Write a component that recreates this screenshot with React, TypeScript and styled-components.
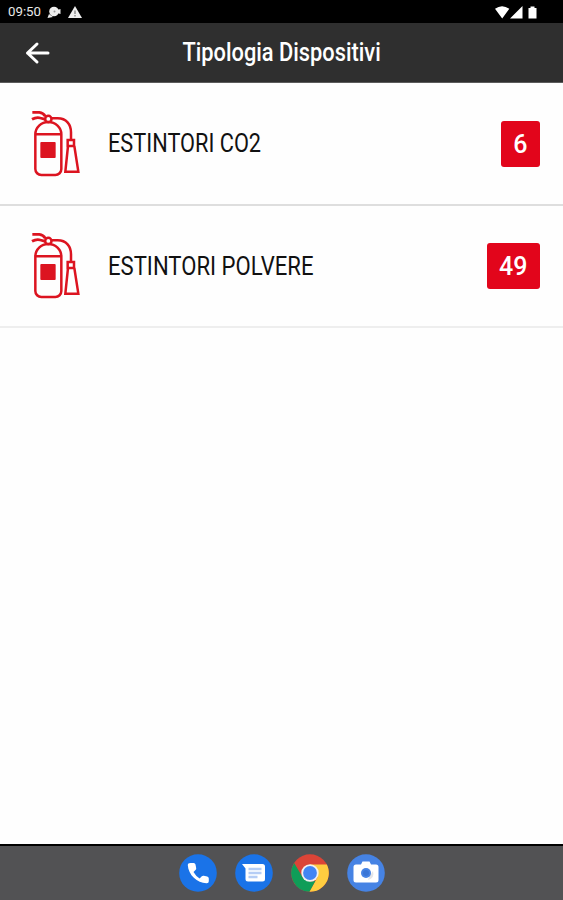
import React from 'react';
import styled, { createGlobalStyle } from 'styled-components';

const GlobalStyle = createGlobalStyle`
  * { box-sizing: border-box; }
  body { margin: 0; background: #fefefe; font-family: Roboto, "Liberation Sans", sans-serif; }
`;

const Screen = styled.div`
  display: flex;
  flex-direction: column;
  width: 100%;
  height: 100vh;
  overflow: hidden;
  background: #fefefe;
`;

const StatusBar = styled.div`
  display: flex;
  align-items: center;
  justify-content: space-between;
  height: 23px;
  flex: none;
  padding: 1px 25px 0 8px;
  background: #000;
  color: #e8e8e8;
`;

const StatusGroup = styled.div<{ $gap: number }>`
  display: flex;
  align-items: center;
  gap: ${(p) => p.$gap}px;
`;

const Clock = styled.span`
  width: 33px;
  font-size: 13px;
  line-height: 22px;
  white-space: nowrap;
  transform: scaleX(1.02);
  transform-origin: left;
`;

const Header = styled.header`
  display: grid;
  grid-template-columns: 76px 1fr 76px;
  align-items: center;
  height: 60px;
  flex: none;
  background: #2f2f2f;
  border-bottom: 1px solid #5c5c5c;
`;

const BackButton = styled.button`
  display: flex;
  align-items: center;
  justify-content: center;
  height: 59px;
  padding: 0;
  border: 0;
  background: none;
`;

const Title = styled.h1`
  justify-self: center;
  margin: 1px 0 0 1px;
  color: #fff;
  font-size: 25px;
  font-weight: 500;
  line-height: 30px;
  white-space: nowrap;
  transform: scaleX(0.873);
`;

const List = styled.main`
  flex: 1;
`;

const Row = styled.div<{ $line: string; $height: number }>`
  display: flex;
  align-items: center;
  height: ${(p) => p.$height}px;
  padding: 0 23px 0 31px;
  border-bottom: 2px solid ${(p) => p.$line};
`;

const Label = styled.span<{ $scale: number }>`
  flex: 1;
  margin: 1px 0 0 27px;
  color: #111;
  font-size: 25px;
  line-height: 30px;
  white-space: nowrap;
  transform: scaleX(${(p) => p.$scale});
  transform-origin: left;
`;

const Badge = styled.span`
  display: flex;
  align-items: center;
  justify-content: center;
  height: 46px;
  padding: 1px 12.5px 0;
  border-radius: 3px;
  background: #e2051b;
  color: #fff;
  font-size: 25px;
  font-weight: 500;
  line-height: 45px;
`;

const Dock = styled.nav`
  display: flex;
  align-items: center;
  justify-content: center;
  gap: 18px;
  height: 56px;
  flex: none;
  border-top: 2px solid #000;
  background: #525254;
`;

const Extinguisher = () => (
  <svg width="50" height="68" viewBox="36 30 150 204" fill="none" stroke="#dc1420" strokeWidth="7.5">
    <path d="M49 103a39 37 0 0 1 78 0v104a18 18 0 0 1-18 18H67a18 18 0 0 1-18-18ZM49 103h78" />
    <circle cx="88" cy="57" r="9.5" />
    <path d="M40 37h21q12 1 18 12M39 58q14-8 25-4l15 4" strokeWidth="8.5" />
    <path d="M98 55h18c26 0 40 18 40 42v22M146 120h19v18h-19ZM147 138l-8 77h39l-12-77" />
    <rect x="64" y="126" width="46" height="48" rx="3" fill="#dc1420" stroke="none" />
  </svg>
);

const BugIcon = () => (
  <svg width="15" height="13" viewBox="0 0 15 13" fill="#eee">
    <circle cx="7" cy="5.5" r="4.8" />
    <path d="m.5 12 1.500-4 4 3ZM10 4l3.500-1v5L10 7Z" />
    <circle cx="7.500" cy="5.500" r="1" fill="#999" />
  </svg>
);

const WarningIcon = () => (
  <svg width="14" height="12" viewBox="0 0 14 12">
    <path d="M7 0 14 12H0Z" fill="#eee" />
    <path d="M7 4.500v3.500M7 9v1.400" stroke="#777" strokeWidth="1.200" />
  </svg>
);

const SignalIcons = () => (
  <svg width="43" height="13" viewBox="0 0 43 13" fill="#fff">
    <path d="M0 2.800Q7-2.300 14.300 2.800L7.200 12.500ZM27.500 0v12.500H15ZM33.500 2h2V.4h4V2h2v10.500h-8Z" />
  </svg>
);

const BackArrow = () => (
  <svg width="26" height="24" viewBox="0 0 26 24" fill="none" stroke="#fff" strokeWidth="3" strokeLinecap="round" strokeLinejoin="round">
    <path d="M2.500 12H23M12 3 2.500 12 12 21" />
  </svg>
);

const PhoneIcon = () => (
  <svg width="38" height="38" viewBox="0 0 38 38">
    <circle cx="19" cy="19" r="18.800" fill="#1a73e8" />
    <path
      d="M11.500 9h3.200q1.500 0 1.800 1.500l.7 3.500q.2 1.300-.7 2.100l-2 1.900q2.200 4 6.100 6.400l2.200-2.100q.9-.8 2-.5l3.400.7q1.600.4 1.600 1.900v2.800q0 2-2 2C18.500 29.400 9.300 21 8.800 11.300Q8.700 9 11.500 9Z"
      fill="#fff"
    />
  </svg>
);

const MessagesIcon = () => (
  <svg width="38" height="38" viewBox="0 0 38 38">
    <circle cx="19" cy="19" r="18.800" fill="#1a73e8" />
    <path d="M7 10h20.500a2.500 2.500 0 0 1 2.500 2.500v12.500a2.500 2.500 0 0 1-2.500 2.500H13a2.500 2.500 0 0 1-2.500-2.500V14.500Z" fill="#fff" />
    <path d="M13.500 15h13M13.500 19h13M13.500 23h9" stroke="#b5cdf5" strokeWidth="2.600" />
  </svg>
);

const ChromeIcon = () => (
  <svg width="38" height="38" viewBox="0 0 38 38">
    <circle cx="19" cy="19" r="18.800" fill="#db4437" />
    <path d="M19 10.500h16.800A18.800 18.800 0 0 1 18.400 37.800L26.400 23.300Z" fill="#ffcd40" />
    <path d="M3.200 8.900 11.600 23.300Q16 29 24.500 26.800L18.400 37.800A18.800 18.800 0 0 1 3.200 8.900Z" fill="#0f9d58" />
    <circle cx="19" cy="19" r="8.700" fill="#f1f1f1" />
    <circle cx="19" cy="19" r="6.900" fill="#4285f4" />
  </svg>
);

const CameraIcon = () => (
  <svg width="38" height="38" viewBox="0 0 38 38">
    <circle cx="19" cy="19" r="18.800" fill="#4683e4" />
    <path d="M9 10.500h5l1.500-3h7l1.500 3h5q2.500 0 2.500 2.500v13q0 2.500-2.500 2.500H9q-2.500 0-2.500-2.500V13Q6.500 10.500 9 10.500Z" fill="#fff" />
    <path d="m22 23 4-6q2 7-5 9Z" fill="#e3e5e8" />
    <circle cx="19" cy="19" r="5" fill="#4683e4" />
    <circle cx="19" cy="19" r="3" fill="#3975d6" />
  </svg>
);

const devices = [
  { name: 'ESTINTORI CO2', count: 6, line: '#dedede', scale: 0.87, height: 123 },
  { name: 'ESTINTORI POLVERE', count: 49, line: '#eeeeee', scale: 0.884, height: 122 },
];

export default function App() {
  return (
    <Screen>
      <GlobalStyle />
      <StatusBar>
        <StatusGroup $gap={6}>
          <Clock>09:50</Clock>
          <BugIcon />
          <WarningIcon />
        </StatusGroup>
        <SignalIcons />
      </StatusBar>
      <Header>
        <BackButton aria-label="Indietro"><BackArrow /></BackButton>
        <Title>Tipologia Dispositivi</Title>
      </Header>
      <List>
        {devices.map((d) => (
          <Row key={d.name} $line={d.line} $height={d.height}>
            <Extinguisher />
            <Label $scale={d.scale}>{d.name}</Label>
            <Badge>{d.count}</Badge>
          </Row>
        ))}
      </List>
      <Dock>
        <PhoneIcon />
        <MessagesIcon />
        <ChromeIcon />
        <CameraIcon />
      </Dock>
    </Screen>
  );
}
